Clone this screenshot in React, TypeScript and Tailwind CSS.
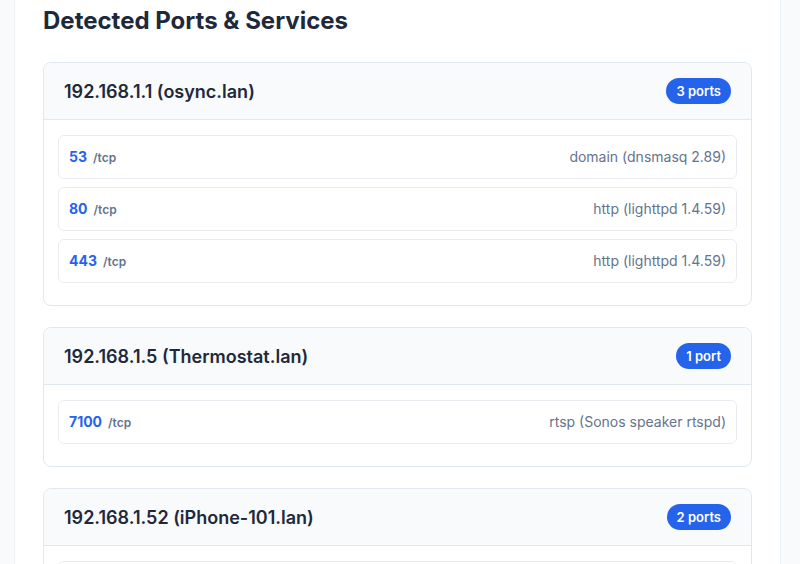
import React from 'react';

type Port = { port: number; proto: string; service: string };
type Host = { ip: string; name: string; ports: Port[]; count: number };

const hosts: Host[] = [
  {
    ip: '192.168.1.1',
    name: 'osync.lan',
    count: 3,
    ports: [
      { port: 53, proto: 'tcp', service: 'domain (dnsmasq 2.89)' },
      { port: 80, proto: 'tcp', service: 'http (lighttpd 1.4.59)' },
      { port: 443, proto: 'tcp', service: 'http (lighttpd 1.4.59)' },
    ],
  },
  {
    ip: '192.168.1.5',
    name: 'Thermostat.lan',
    count: 1,
    ports: [{ port: 7100, proto: 'tcp', service: 'rtsp (Sonos speaker rtspd)' }],
  },
  {
    ip: '192.168.1.52',
    name: 'iPhone-101.lan',
    count: 2,
    ports: [
      { port: 62078, proto: 'tcp', service: 'iphone-sync' },
      { port: 49152, proto: 'tcp', service: 'unknown' },
    ],
  },
];

function HostCard({ host }: { host: Host }) {
  return (
    <div className="mb-[21px] overflow-hidden rounded-lg border border-[#e2e8f0] bg-white">
      <div className="flex h-[57px] items-center justify-between border-b border-[#e2e8f0] bg-[#f8fafc] px-5">
        <h3 className="text-[18px] font-semibold text-[#1e293b]">
          {host.ip} ({host.name})
        </h3>
        <span className="rounded-full bg-[#2563eb] px-[10px] py-1 text-[13px] leading-[18px] font-semibold text-white">
          {host.count} {host.count === 1 ? 'port' : 'ports'}
        </span>
      </div>
      <div className="px-[14px] pt-[15px] pb-[14px]">
        {host.ports.map((p) => (
          <div
            key={p.port}
            className="mb-2 flex h-[44px] items-center justify-between rounded-md border border-[#e8ecf1] bg-white px-2.5"
          >
            <div className="flex items-baseline gap-1.5">
              <span className="text-[14px] leading-5 font-bold text-[#2563eb]">{p.port}</span>
              <span className="text-xs font-semibold text-[#64748b]">/{p.proto}</span>
            </div>
            <span className="text-[14px] leading-5 text-[#64748b]">{p.service}</span>
          </div>
        ))}
      </div>
    </div>
  );
}

export default function App() {
  return (
    <div
      className="h-[564px] overflow-hidden bg-[#f8fafc]"
      style={{ fontFamily: 'Inter, "Noto Sans", sans-serif' }}
    >
      <div className="ml-[14px] min-h-full w-[767px] border-x border-[#eef1f5] bg-white px-7 pt-[5px]">
        <h2 className="mb-[25px] text-[24px] leading-8 font-bold text-[#1e293b]">
          Detected Ports &amp; Services
        </h2>
        {hosts.map((h) => (
          <HostCard key={h.ip} host={h} />
        ))}
      </div>
    </div>
  );
}
